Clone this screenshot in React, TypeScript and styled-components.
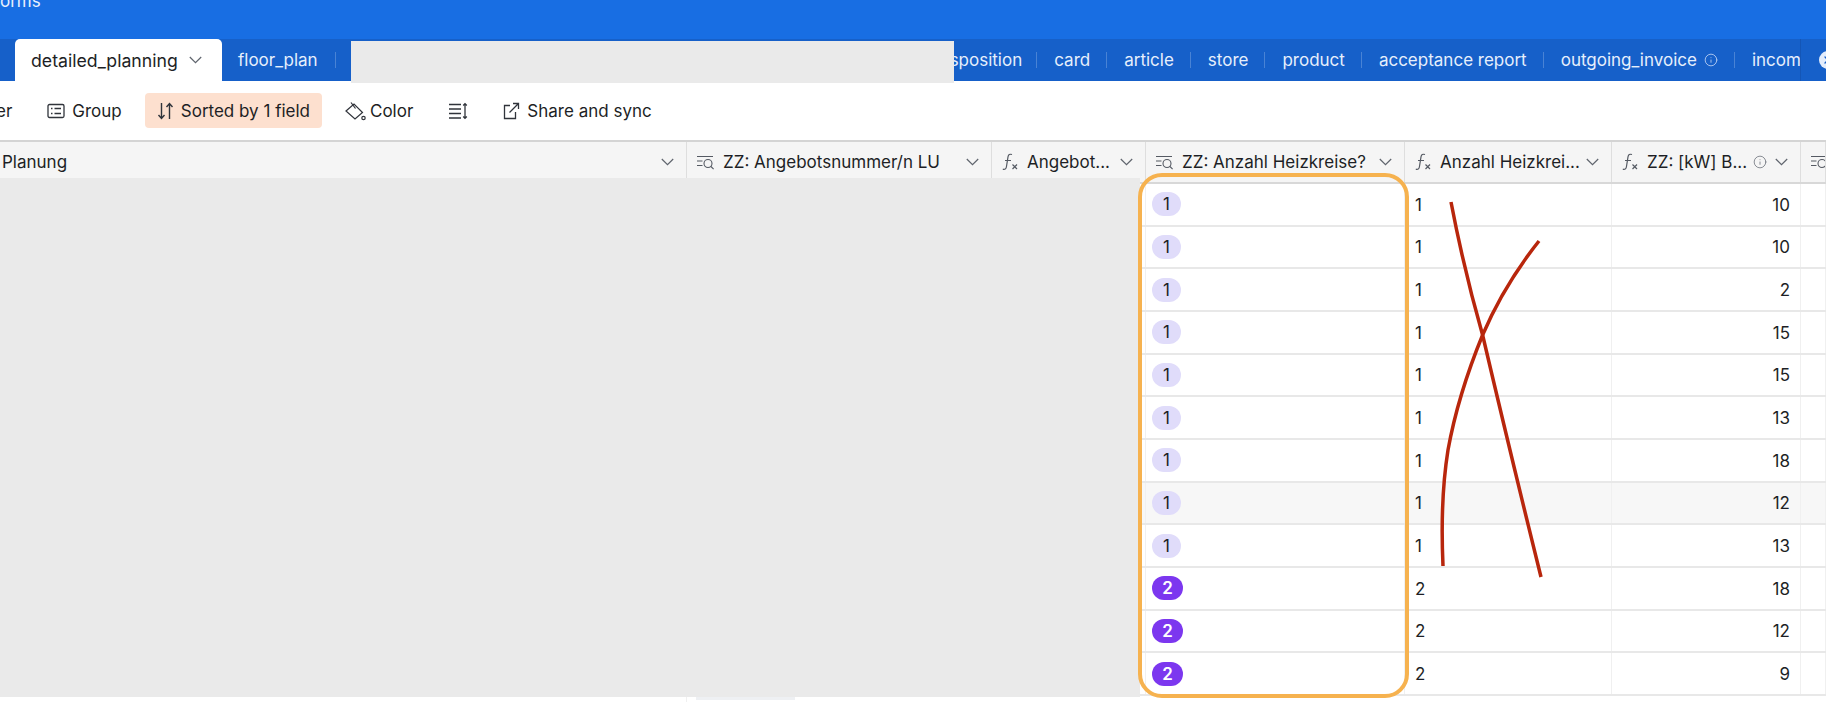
import styled, { createGlobalStyle } from 'styled-components'
import { Info, X } from 'lucide-react'

const GlobalStyle = createGlobalStyle`
  html, body { margin: 0; background: #ffffff; }
  * { box-sizing: border-box; }
`

const COLUMNS = '687px 305px 154px 259px 207px 189px 25px'

const Page = styled.div`
  position: relative;
  width: 1826px;
  height: 702px;
  overflow: hidden;
  background: #ffffff;
  color: #1d1f25;
  font-family: Inter, "Liberation Sans", sans-serif;
  font-size: 17px;
`

const TopBar = styled.header`
  height: 39px;
  overflow: hidden;
  background: #186ee3;
  color: #e8f0fd;
  line-height: 17px;
`

const BaseName = styled.div`
  margin: -7px 0 0 0;
`

const TabStrip = styled.nav`
  display: flex;
  height: 42px;
  padding-left: 15px;
  background: #1660c9;
`

const ActiveTab = styled.div`
  display: flex;
  flex: none;
  align-items: center;
  gap: 11px;
  width: 207px;
  padding-left: 16px;
  border-radius: 5px 5px 0 0;
  background: #ffffff;
  font-size: 17.7px;
`

const Tab = styled.div`
  position: relative;
  display: flex;
  flex: none;
  align-items: center;
  gap: 7px;
  padding: 0 17px;
  color: #e6effc;
  svg { width: 14px; height: 14px; color: #c4d7f5; }
  &::after {
    content: '';
    position: absolute;
    top: 13px;
    right: 0;
    width: 1px;
    height: 16px;
    background: rgba(255, 255, 255, 0.22);
  }
`

const FloorTab = styled(Tab)`
  padding: 0 18px 0 16px;
`

const ClippedTab = styled(Tab)`
  padding: 0 15px 0 0;
  margin-left: -4px;
`

const Redaction = styled.div`
  position: relative;
  z-index: 1;
  flex: none;
  width: 603px;
  height: 42px;
  margin: 2px 0 0 15px;
  background: #eaeaea;
`

const RightTabs = styled.div`
  display: flex;
  flex: none;
  width: 846px;
  overflow: hidden;
`

const StripEnd = styled.div`
  flex: none;
  display: flex;
  align-items: center;
  padding-left: 18px;
  border-left: 1px solid #1456b6;
`

const CloseDot = styled.span`
  display: grid;
  place-items: center;
  flex: none;
  width: 18px;
  height: 18px;
  border-radius: 50%;
  background: #e4edfb;
  color: #1660c9;
  svg { width: 12px; height: 12px; }
`

const Toolbar = styled.div`
  display: flex;
  align-items: center;
  gap: 11px;
  height: 59px;
  margin-left: -4px;
`

const ToolButton = styled.div<{ $active?: boolean; $bare?: boolean; $tight?: boolean }>`
  display: flex;
  align-items: center;
  gap: ${(p) => (p.$tight ? '4px' : '7px')};
  height: 35px;
  padding: ${(p) => (p.$bare ? '0 12px 0 0' : '0 12px')};
  border-radius: 4px;
  background: ${(p) => (p.$active ? '#fde0cf' : 'transparent')};
  svg { flex: none; }
`

const HeaderRow = styled.div`
  display: grid;
  grid-template-columns: ${COLUMNS};
  height: 44px;
  border-top: 2px solid #d4d4d4;
  border-bottom: 2px solid #d8d8d8;
  background: #f5f5f5;
`

const HeaderCell = styled.div`
  display: flex;
  align-items: center;
  gap: 8px;
  min-width: 0;
  overflow: hidden;
  padding: 0 12px 0 9px;
  border-right: 1px solid #dedede;
  white-space: nowrap;
  svg { flex: none; }
  &:first-child { padding-left: 2px; }
`

const HeaderLabel = styled.span`
  flex: 1;
  min-width: 0;
`

const Row = styled.div<{ $hover?: boolean }>`
  display: grid;
  grid-template-columns: ${COLUMNS};
  height: 42.67px;
  border-bottom: 2px solid #e8e8e8;
  background: ${(p) => (p.$hover ? '#f7f7f7' : 'transparent')};
`

const Cell = styled.div<{ $right?: boolean }>`
  display: flex;
  align-items: center;
  justify-content: ${(p) => (p.$right ? 'flex-end' : 'flex-start')};
  padding: 1px 10px 0;
  border-right: 1px solid #f0f0f0;
`

const Badge = styled.span<{ $strong?: boolean }>`
  display: grid;
  place-items: center;
  width: ${(p) => (p.$strong ? '31px' : '29px')};
  height: 24px;
  margin: -1px 0 0 -4px;
  border-radius: 12px;
  background: ${(p) => (p.$strong ? '#7c37ef' : '#e0dcfa')};
  color: ${(p) => (p.$strong ? '#ffffff' : '#1d1f25')};
  font-weight: ${(p) => (p.$strong ? 600 : 400)};
`

const Footer = styled(Row)`
  border-bottom: none;
`

const FooterChip = styled.div`
  width: 99px;
  height: 4px;
  margin: 0 0 0 9px;
  background: #eef0f3;
`

const GreyBlock = styled.div`
  position: absolute;
  top: 178px;
  left: 0;
  width: 1140px;
  height: 519px;
  background: #eaeaea;
`

const Highlight = styled.div`
  position: absolute;
  top: 173px;
  left: 1138px;
  width: 271px;
  height: 525px;
  border: 4px solid #f6b24f;
  border-radius: 24px;
`

const Scribble = styled.svg`
  position: absolute;
  top: 0;
  left: 0;
  width: 1826px;
  height: 702px;
  fill: none;
  stroke: #b8260c;
  stroke-width: 3.5;
  pointer-events: none;
`

const Chevron = () => (
  <svg width="13" height="8" viewBox="0 0 13 8" fill="none" stroke="#5f646d" strokeWidth="1.2">
    <path d="M.8 1l5.7 5.7L12.2 1" />
  </svg>
)

const InfoMark = () => <Info size={14} strokeWidth={1.3} color="#666b74" />

const LookupIcon = () => (
  <svg width="19" height="16" viewBox="0 0 19 16" fill="none" stroke="#555a63" strokeWidth="1.1">
    <path d="M1 2.5h16M1 7h5.5M1 11.5h5.5" />
    <circle cx="12" cy="9.5" r="4" />
    <path d="M15 12.5l2.6 2.6" />
  </svg>
)

const FormulaIcon = () => (
  <svg width="18" height="20" viewBox="0 0 18 20" fill="none" stroke="#555a63" strokeWidth="1.2">
    <path d="M11 2.5c-2.3-.8-3.6.3-4 2.4L5.4 15c-.4 2-1.5 2.8-3.6 2.2M4 8.5h6" />
    <path d="M11.5 12.5l4.5 4.5M16 12.5L11.5 17" />
  </svg>
)

const GroupIcon = () => (
  <svg width="18" height="18" viewBox="0 0 18 18" fill="none" stroke="#30343b" strokeWidth="1.3">
    <rect x="1" y="2.5" width="16" height="13" rx="1.5" />
    <path d="M4 6.5h1.5M7.5 6.5H14M4 11.5h1.5M7.5 11.5H14" />
  </svg>
)

const SortIcon = () => (
  <svg width="17" height="18" viewBox="0 0 17 18" fill="none" stroke="#30343b" strokeWidth="1.4">
    <path d="M4.5 1v15.5M1.5 13l3 3.5 3-3.5" />
    <path d="M12.5 17V1.5M9.5 5l3-3.5 3 3.5" />
  </svg>
)

const BucketIcon = () => (
  <svg width="21" height="20" viewBox="0 0 21 20" fill="none" stroke="#30343b" strokeWidth="1.2">
    <path d="M1 10l8-7 8.5 8.5-7.5 6.5z" />
    <path d="M6 1.5l4.5 6" />
    <circle cx="18.5" cy="17" r="1.7" />
  </svg>
)

const RowHeightIcon = () => (
  <svg width="20" height="18" viewBox="0 0 20 18" fill="none" stroke="#30343b" strokeWidth="1.3">
    <path d="M1 2.5h12M1 7h12M1 11.5h12M1 16h12" />
    <path d="M17 2v14M15.2 3.5L17 1.6l1.8 1.9M15.2 14.5l1.8 1.9 1.8-1.9" />
  </svg>
)

const ShareIcon = () => (
  <svg width="17" height="18" viewBox="0 0 17 18" fill="none" stroke="#30343b" strokeWidth="1.3">
    <path d="M7 3.5H1.5v13h11V10" />
    <path d="M6.5 10.5L15.5 1.5M10 1.5h5.5V7" />
  </svg>
)

const rightTabs = ['card', 'article', 'store', 'product', 'acceptance report']

const rows = [
  [1, 10], [1, 10], [1, 2], [1, 15], [1, 15], [1, 13],
  [1, 18], [1, 12], [1, 13], [2, 18], [2, 12], [2, 9],
]

export default function App() {
  return (
    <Page>
      <GlobalStyle />
      <TopBar>
        <BaseName>orms</BaseName>
      </TopBar>

      <TabStrip>
        <ActiveTab>
          detailed_planning
          <Chevron />
        </ActiveTab>
        <FloorTab>floor_plan</FloorTab>
        <Redaction />
        <RightTabs>
          <ClippedTab>sposition</ClippedTab>
          {rightTabs.map((name) => (
            <Tab key={name}>{name}</Tab>
          ))}
          <Tab>
            outgoing_invoice
            <Info strokeWidth={1.4} />
          </Tab>
          <Tab>incom</Tab>
        </RightTabs>
        <StripEnd>
          <CloseDot><X strokeWidth={2.5} /></CloseDot>
        </StripEnd>
      </TabStrip>

      <Toolbar>
        <ToolButton $bare>er</ToolButton>
        <ToolButton>
          <GroupIcon />
          Group
        </ToolButton>
        <ToolButton $active>
          <SortIcon />
          Sorted by 1 field
        </ToolButton>
        <ToolButton $tight>
          <BucketIcon />
          Color
        </ToolButton>
        <ToolButton>
          <RowHeightIcon />
        </ToolButton>
        <ToolButton>
          <ShareIcon />
          Share and sync
        </ToolButton>
      </Toolbar>

      <HeaderRow>
        <HeaderCell>
          <HeaderLabel>Planung</HeaderLabel>
          <Chevron />
        </HeaderCell>
        <HeaderCell>
          <LookupIcon />
          <HeaderLabel>ZZ: Angebotsnummer/n LU</HeaderLabel>
          <Chevron />
        </HeaderCell>
        <HeaderCell>
          <FormulaIcon />
          <HeaderLabel>Angebot...</HeaderLabel>
          <Chevron />
        </HeaderCell>
        <HeaderCell>
          <LookupIcon />
          <HeaderLabel>ZZ: Anzahl Heizkreise?</HeaderLabel>
          <Chevron />
        </HeaderCell>
        <HeaderCell>
          <FormulaIcon />
          <HeaderLabel>Anzahl Heizkrei...</HeaderLabel>
          <Chevron />
        </HeaderCell>
        <HeaderCell>
          <FormulaIcon />
          <HeaderLabel>ZZ: [kW] B...</HeaderLabel>
          <InfoMark />
          <Chevron />
        </HeaderCell>
        <HeaderCell>
          <LookupIcon />
        </HeaderCell>
      </HeaderRow>

      {rows.map(([count, power], i) => (
        <Row key={i} $hover={i === 7}>
          <Cell />
          <Cell />
          <Cell />
          <Cell>
            <Badge $strong={count === 2}>{count}</Badge>
          </Cell>
          <Cell>{count}</Cell>
          <Cell $right>{power}</Cell>
          <Cell />
        </Row>
      ))}
      <Footer>
        <Cell />
        <div><FooterChip /></div>
      </Footer>

      <GreyBlock />
      <Highlight />
      <Scribble viewBox="0 0 1826 702">
        <path d="M1451 202 Q1464 270 1482.6 335 Q1512 460 1541 577" />
        <path d="M1539 241 Q1504 285 1482.6 335 Q1458 395 1448 450 Q1440 500 1443 566" />
      </Scribble>
    </Page>
  )
}
